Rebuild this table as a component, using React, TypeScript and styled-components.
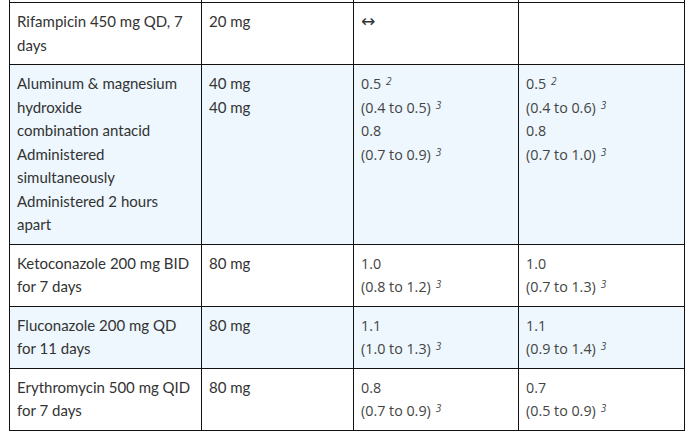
import React from 'react';
import styled, { createGlobalStyle } from 'styled-components';

const GlobalStyle = createGlobalStyle`
  html, body {
    margin: 0;
    padding: 0;
    background: #fff;
  }
`;

const Page = styled.div`
  padding-left: 9px;
  width: 675px;
`;

const Table = styled.table`
  border-collapse: collapse;
  table-layout: fixed;
  width: 675px;
`;

const Row = styled.tr<{ $alt?: boolean }>`
  background: ${(p) => (p.$alt ? '#edf7fd' : '#fff')};
`;

const Cell = styled.td<{ $ratio?: boolean }>`
  border: 1px solid #111;
  vertical-align: top;
  padding: 7px 7px 7px 7px;
  line-height: 23.5px;
  font-family: ${(p) => (p.$ratio ? '"Open Sans", sans-serif' : 'Lato, sans-serif')};
  font-size: ${(p) => (p.$ratio ? '14.3px' : '15px')};
  color: ${(p) => (p.$ratio ? '#444' : '#333')};
  white-space: nowrap;
`;

const StubCell = styled.td`
  border: 1px solid #111;
  border-top: none;
  height: 2px;
  padding: 0;
`;

const Note = styled.sup`
  font-style: italic;
  font-size: 10px;
  line-height: 0;
  margin-left: 5px;
  vertical-align: 4px;
`;

const Arrow = styled.span`
  font-family: 'DejaVu Sans', sans-serif;
  font-size: 17px;
  color: #333;
`;

type Ratio = { value: string; range?: string; note?: string };

type Entry = {
  drug: string[];
  dose: string[];
  auc: Ratio[] | 'none';
  cmax: Ratio[] | 'empty';
  alt?: boolean;
};

const entries: Entry[] = [
  { drug: ['Rifampicin 450 mg QD, 7', 'days'], dose: ['20 mg'], auc: 'none', cmax: 'empty' },
  {
    drug: [
      'Aluminum & magnesium',
      'hydroxide',
      'combination antacid',
      'Administered',
      'simultaneously',
      'Administered 2 hours',
      'apart',
    ],
    dose: ['40 mg', '40 mg'],
    auc: [
      { value: '0.5', note: '2', range: '(0.4 to 0.5)' },
      { value: '0.8', range: '(0.7 to 0.9)' },
    ],
    cmax: [
      { value: '0.5', note: '2', range: '(0.4 to 0.6)' },
      { value: '0.8', range: '(0.7 to 1.0)' },
    ],
    alt: true,
  },
  {
    drug: ['Ketoconazole 200 mg BID', 'for 7 days'],
    dose: ['80 mg'],
    auc: [{ value: '1.0', range: '(0.8 to 1.2)' }],
    cmax: [{ value: '1.0', range: '(0.7 to 1.3)' }],
  },
  {
    drug: ['Fluconazole 200 mg QD', 'for 11 days'],
    dose: ['80 mg'],
    auc: [{ value: '1.1', range: '(1.0 to 1.3)' }],
    cmax: [{ value: '1.1', range: '(0.9 to 1.4)' }],
    alt: true,
  },
  {
    drug: ['Erythromycin 500 mg QID', 'for 7 days'],
    dose: ['80 mg'],
    auc: [{ value: '0.8', range: '(0.7 to 0.9)' }],
    cmax: [{ value: '0.7', range: '(0.5 to 0.9)' }],
  },
];

const Lines: React.FC<{ lines: string[] }> = ({ lines }) => (
  <>
    {lines.map((l, i) => (
      <div key={i}>{l}</div>
    ))}
  </>
);

const Ratios: React.FC<{ items: Ratio[] }> = ({ items }) => (
  <>
    {items.map((r, i) => (
      <React.Fragment key={i}>
        <div>
          {r.value}
          {r.note ? <Note>{r.note}</Note> : null}
        </div>
        {r.range ? (
          <div>
            {r.range}
            <Note>3</Note>
          </div>
        ) : null}
      </React.Fragment>
    ))}
  </>
);

export default function App() {
  return (
    <Page>
      <GlobalStyle />
      <Table>
        <colgroup>
          <col style={{ width: 192 }} />
          <col style={{ width: 152 }} />
          <col style={{ width: 165 }} />
          <col style={{ width: 166 }} />
        </colgroup>
        <tbody>
          <tr>
            <StubCell />
            <StubCell />
            <StubCell />
            <StubCell />
          </tr>
          {entries.map((e, i) => (
            <Row key={i} $alt={e.alt}>
              <Cell>
                <Lines lines={e.drug} />
              </Cell>
              <Cell>
                <Lines lines={e.dose} />
              </Cell>
              <Cell $ratio>
                {e.auc === 'none' ? <Arrow>↔</Arrow> : <Ratios items={e.auc} />}
              </Cell>
              <Cell $ratio>{e.cmax === 'empty' ? null : <Ratios items={e.cmax} />}</Cell>
            </Row>
          ))}
        </tbody>
      </Table>
    </Page>
  );
}
